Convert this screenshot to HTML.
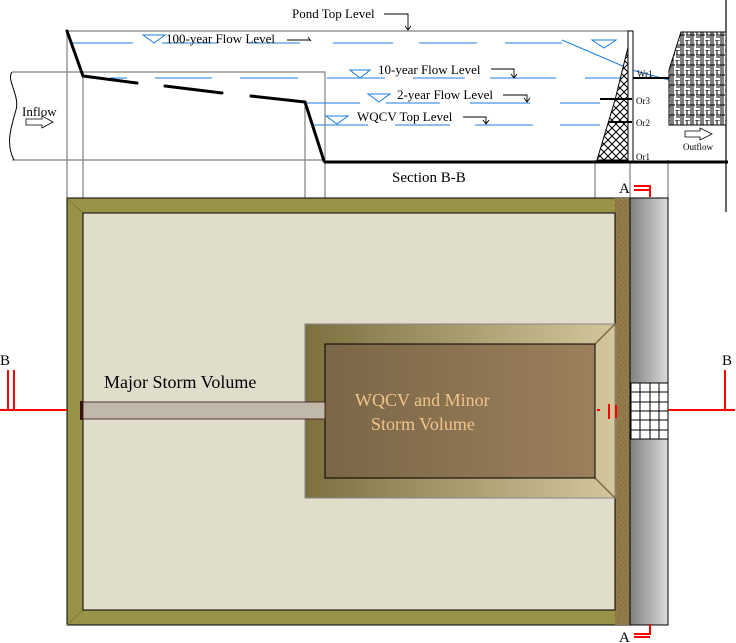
<!DOCTYPE html>
<html><head><meta charset="utf-8"><style>
html,body{margin:0;padding:0;background:#fff;width:736px;height:643px;overflow:hidden}
svg{display:block}
text{font-family:"Liberation Serif",serif;fill:#000}
</style></head><body>
<svg width="736" height="643" viewBox="0 0 736 643" xmlns="http://www.w3.org/2000/svg">
<defs>
<linearGradient id="gcol" x1="0" x2="1"><stop offset="0" stop-color="#7f7f7f"/><stop offset="1" stop-color="#dcdcdc"/></linearGradient>
<linearGradient id="gbas" x1="0" x2="1"><stop offset="0" stop-color="#7d703f"/><stop offset="1" stop-color="#d4c79d"/></linearGradient>
<linearGradient id="gin" x1="0" x2="1"><stop offset="0" stop-color="#7a6747"/><stop offset="1" stop-color="#9c7f5b"/></linearGradient>
<pattern id="hatch" width="8" height="8" patternUnits="userSpaceOnUse"><rect width="8" height="8" fill="#fff"/><path d="M0 4 L4 0 L8 4 M0 4 L4 8 L8 4" stroke="#000" fill="none" stroke-width="1"/></pattern>
<pattern id="rip" width="10" height="10" patternUnits="userSpaceOnUse"><rect width="10" height="10" fill="#fff"/><path d="M1 0V5M3 0V5M6 5H10M6 7H10M5 0H10M0 5H5M1 5V10M3 5V10M7 0V5" stroke="#000" stroke-width="1"/></pattern>
<pattern id="spk" width="5" height="5" patternUnits="userSpaceOnUse"><rect width="5" height="5" fill="#8e7c4c"/><rect x="0" y="0" width="1" height="1" fill="#b04a30"/><rect x="3" y="2" width="1" height="1" fill="#a8583a"/></pattern>
</defs>
<g stroke="#808080" stroke-width="1.2" fill="none">
<line x1="67" y1="31" x2="632" y2="31"/>
<line x1="67" y1="31" x2="67" y2="200"/><line x1="83" y1="76" x2="83" y2="200"/>
<line x1="305" y1="102" x2="305" y2="200"/><line x1="325" y1="160" x2="325" y2="200"/>
<line x1="595" y1="160" x2="595" y2="200"/><line x1="630" y1="160" x2="630" y2="200"/><line x1="668" y1="160" x2="668" y2="200"/>
<path d="M12 72H325V160H12"/>
</g>
<path d="M12 72 C6 80 20 95 16 110 C10 130 6 145 14 160" stroke="#000" fill="#fff" stroke-width="1"/>
<line x1="726" y1="0" x2="726" y2="212" stroke="#000" stroke-width="1.2"/>
<g stroke="#1a7fe0" stroke-width="1" fill="none">
<path d="M72 43H133M162 43H218M247 43H300M333 43H393M419 43H477M505 43H562"/>
<path d="M562 40 L632 70 L669 80"/>
<path d="M110 78H127M155 78H212M240 78H298M327 78H385M413 78H465M490 78H556M585 78H630"/>
<path d="M305 103H360M386 103H440M470 103H530M560 103H600"/>
<path d="M312 125H368M395 125H450M475 125H533M560 125H600"/>
<path d="M143 35H165L154 43Z M350 70H370L360 78Z M592 40H616L604 48Z M368 94H390L379 102Z M326 116H348L337 124Z"/>
</g>
<g stroke="#000" stroke-width="3" fill="none" stroke-linecap="round">
<path d="M67 31L83 76L137 83"/><path d="M165 86L222 93"/><path d="M251 96L305 102L324 161"/>
</g>
<line x1="324" y1="162" x2="728" y2="162" stroke="#000" stroke-width="3"/>
<path d="M597 160L615 100L632 31V160Z" fill="url(#hatch)" stroke="#000"/>
<rect x="628" y="31" width="5" height="130" fill="#fff" stroke="#000"/>
<path d="M600 99H632M608 122H632" stroke="#000" stroke-width="2"/>
<line x1="633" y1="78" x2="669" y2="78" stroke="#000" stroke-width="2"/>
<path d="M669 125L669 70L681 32H726V125Z" fill="url(#rip)" stroke="#000"/>
<path d="M685 131H700V128L712 134L700 140V137H685Z" fill="#fff" stroke="#000" stroke-width="0.8"/>
<path d="M26 119H42V116L53 122L42 128V125H26Z" fill="#fff" stroke="#000" stroke-width="0.8"/>
<path d="M384 14H408V29M405 26L408 30L411 26M287 40H310M308 37L311 41" stroke="#000" fill="none" stroke-width="0.9"/>
<path d="M491 69H514V77M511 74L514 78L517 74M503 95H527V101M524 98L527 102L530 98M463 117H486V123M483 120L486 124L489 120" stroke="#000" fill="none" stroke-width="0.9"/>
<text x="292" y="18" font-size="13">Pond Top Level</text>
<text x="166" y="43" font-size="13">100-year Flow Level</text>
<text x="378" y="74" font-size="13">10-year Flow Level</text>
<text x="397" y="99" font-size="13">2-year Flow Level</text>
<text x="357" y="121" font-size="13">WQCV Top Level</text>
<text x="22" y="116" font-size="13">Inflow</text>
<text x="637" y="77" font-size="9">Wr1</text>
<text x="636" y="104" font-size="9">Or3</text>
<text x="636" y="126" font-size="9">Or2</text>
<text x="636" y="160" font-size="9">Or1</text>
<text x="683" y="150" font-size="9">Outflow</text>
<text x="392" y="182" font-size="15">Section B-B</text>
<rect x="67" y="198" width="563" height="427" fill="#979447" stroke="#000"/>
<path d="M67 198L83 213M67 625L83 610" stroke="#7f7a3c"/>
<rect x="615" y="198" width="15" height="427" fill="url(#spk)"/>
<rect x="83" y="213" width="532" height="397" fill="#e0ddcb" stroke="#000"/>
<rect x="630" y="198" width="38" height="427" fill="url(#gcol)" stroke="#000"/>
<g stroke="#000" fill="#fff"><rect x="631" y="383" width="37" height="56"/>
<path d="M640 383V439M650 383V439M659 383V439M631 392H668M631 402H668M631 411H668M631 420H668M631 430H668" fill="none"/></g>
<rect x="305" y="324" width="310" height="174" fill="url(#gbas)" stroke="#888"/>
<path d="M595 344L615 324M595 478L615 498" stroke="#7a6a40" stroke-width="1.5"/>
<rect x="325" y="344" width="270" height="134" fill="url(#gin)" stroke="#000"/>
<rect x="83" y="402" width="242" height="17" fill="#c0b8a8" stroke="#3a1010" stroke-width="0.8"/>
<rect x="80" y="401" width="3" height="19" fill="#3a1010"/>
<text x="104" y="388" font-size="18">Major Storm Volume</text>
<text x="355" y="406" font-size="18" style="fill:#f2c48a">WQCV and Minor</text>
<text x="371" y="430" font-size="18" style="fill:#f2c48a">Storm Volume</text>
<g stroke="#f00" stroke-width="2" fill="none">
<path d="M0 410H14V370M8 410V370M668 410H735M725 410V370"/>
<path d="M14 410H67"/>
<path d="M609 404V419M616 405V418M597 410H600"/>
<path d="M634 186H650V197M634 190H650M634 634H650V624M634 637H650"/>
</g>
<text x="0" y="365" font-size="15">B</text>
<text x="722" y="365" font-size="15">B</text>
<text x="619" y="193" font-size="15">A</text>
<text x="619" y="642" font-size="15">A</text>
</svg>
</body></html>
